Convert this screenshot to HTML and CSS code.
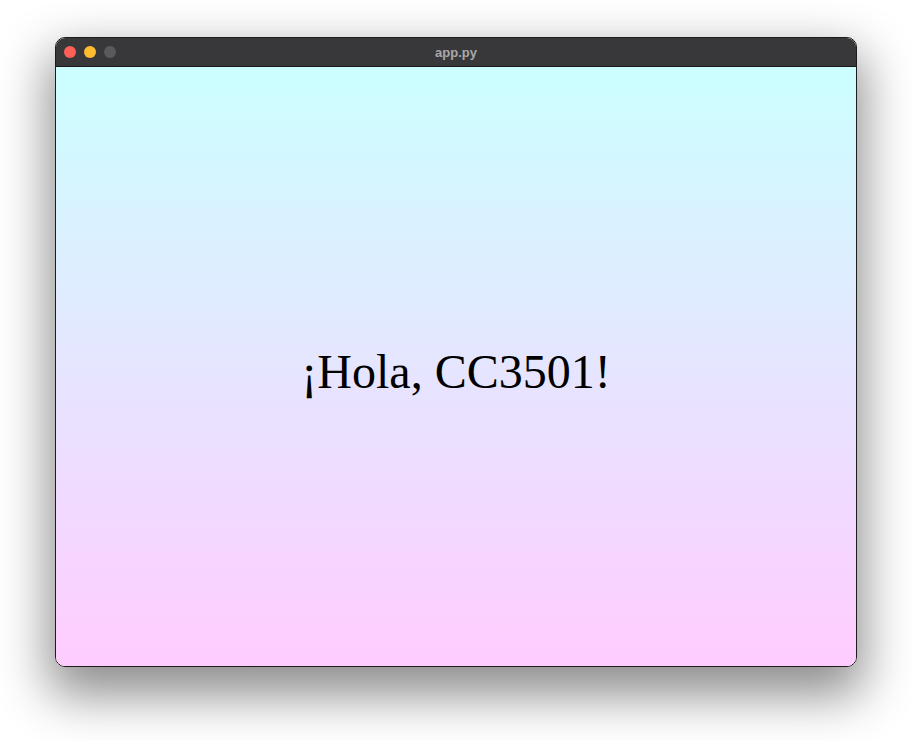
FILE: index.html
```html
<!DOCTYPE html>
<html>
<head>
<meta charset="utf-8">
<link rel="stylesheet" href="styles.css">
</head>
<body>
<div class="stage">
  <div class="window">
    <div class="titlebar">
      <div class="lights">
        <span class="light red"></span>
        <span class="light yellow"></span>
        <span class="light gray"></span>
      </div>
      <div class="title">app.py</div>
    </div>
    <div class="content">
      <p class="greeting">¡Hola, CC3501!</p>
    </div>
  </div>
</div>
</body>
</html>
```

FILE: styles.css
```css
html, body {
  margin: 0;
  padding: 0;
  background: #ffffff;
}
.stage {
  width: 912px;
  height: 740px;
  padding: 37px 0 0 55px;
  box-sizing: border-box;
}
.window {
  width: 802px;
  height: 630px;
  box-sizing: border-box;
  border: 1px solid #1c1c1e;
  border-radius: 10px;
  overflow: hidden;
  display: flex;
  flex-direction: column;
  box-shadow: 0 22px 50px 6px rgba(0,0,0,0.45);
}
.titlebar {
  height: 28px;
  flex: none;
  background: #38383a;
  border-bottom: 1px solid #1a1a1a;
  position: relative;
  display: flex;
  align-items: center;
  justify-content: center;
}
.lights {
  position: absolute;
  left: 8px;
  top: 8px;
  display: flex;
  gap: 8px;
}
.light {
  width: 12px;
  height: 12px;
  border-radius: 50%;
  display: block;
}
.red { background: #fe5f57; }
.yellow { background: #febc2e; }
.gray { background: #5a5a5c; }
.title {
  font-family: "Liberation Sans", Arial, sans-serif;
  font-weight: bold;
  font-size: 13px;
  color: #a8a8aa;
}
.content {
  flex: 1;
  background: linear-gradient(to bottom, #ccffff, #ffccff);
  display: flex;
  align-items: center;
  justify-content: center;
}
.greeting {
  margin: 10px 0 0 0;
  font-family: "Liberation Serif", "Times New Roman", serif;
  font-size: 48px;
  color: #000;
}
```
